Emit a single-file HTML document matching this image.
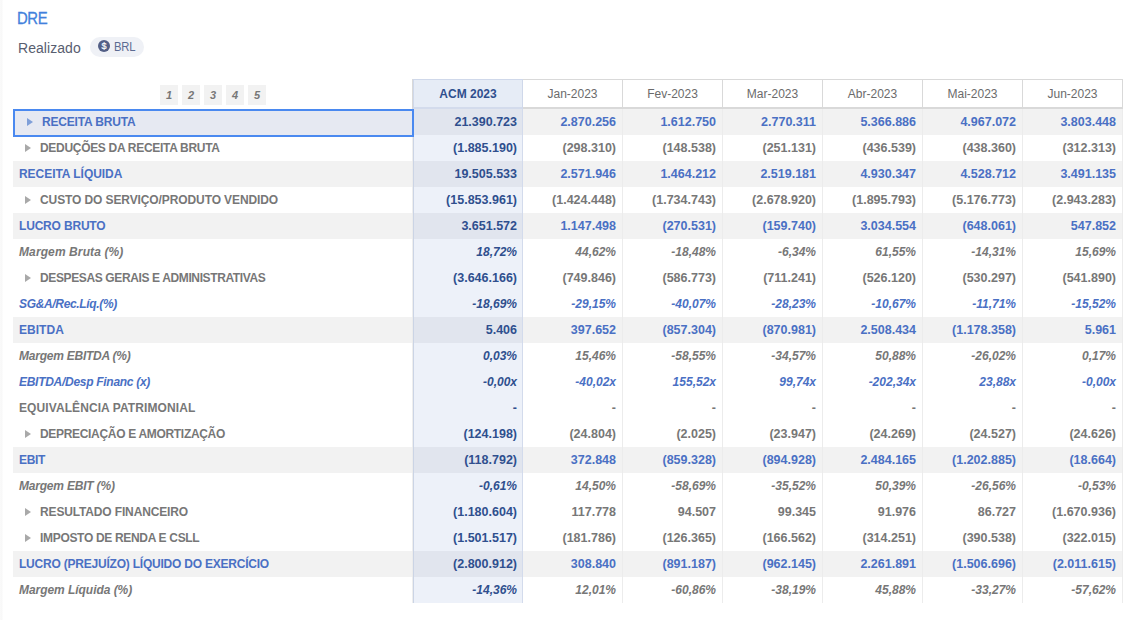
<!DOCTYPE html><html><head><meta charset="utf-8"><style>
*{margin:0;padding:0;box-sizing:border-box}
html,body{width:1131px;height:620px;overflow:hidden;background:#fff}
body{position:relative;font-family:"Liberation Sans",sans-serif}
.a{position:absolute;white-space:nowrap}
.edge{position:absolute;left:0;top:0;width:3px;height:620px;background:linear-gradient(90deg,#fafafa,#f8f8f8 66%,#fff)}
.title{left:17px;top:9px;font-size:16px;color:#4281dc;line-height:20px;letter-spacing:-0.4px;-webkit-text-stroke:0.3px #4281dc;transform:scaleX(0.93);transform-origin:0 0}
.real{left:18px;top:38px;font-size:14px;color:#585e70;line-height:20px;letter-spacing:0.05px}
.badge{left:90px;top:37px;width:54px;height:20px;border-radius:10px;background:#eff1f6}
.coin{left:98px;top:40px;width:12px;height:12px;border-radius:50%;background:#535f86;color:#fff;font-size:9px;font-weight:normal;line-height:12px;text-align:center;-webkit-text-stroke:0.2px #fff}
.brl{left:114.2px;top:39px;font-size:12.5px;color:#5c6a91;line-height:16px;letter-spacing:-0.2px;transform:scaleX(0.9);transform-origin:0 0}
.pg{top:85px;width:18px;height:20px;background:#f2f2f2;color:#777;font-size:11px;font-weight:bold;font-style:italic;text-align:center;line-height:20px}
.hdr{top:79px;height:30px;border-top:1px solid #d9d9d9;border-right:1px solid #d9d9d9;border-bottom:2px solid #d9d9d9;background:#fff;color:#6b6b6b;font-size:12px;text-align:center;line-height:28px}
.hacm{top:79px;height:30px;left:413px;width:110px;border:1px solid #cfd8ea;border-bottom:2px solid #d3dbec;background:#e6ecf6;color:#2f4f8e;font-size:12px;font-weight:bold;text-align:center;line-height:29px}
.row{left:13px;width:1110px;height:26px}
.gbg{background:#f2f2f2}
.acmcol{left:413px;top:109px;width:110px;height:494px;background:#edf1f9;border-left:1px solid #cbd4e5;border-right:1px solid #d3dbec}
.acmg{left:414px;width:108px;height:26px;background:#e1e5ee}
.vline{top:109px;width:1px;height:494px;background:#ececec}
.lbl{font-size:12px;font-weight:bold;line-height:26px}
.tri{width:0;height:0;border-top:4px solid transparent;border-bottom:4px solid transparent;border-left:6px solid #a9a9a9}
.num{font-size:12.5px;font-weight:bold;line-height:26px;text-align:right}
.blue{color:#4a70c4}
.grey{color:#777}
.dblue{color:#2f4f8e}
.it{font-style:italic}
.num.it{font-size:12px}
.sel{left:13px;top:109px;width:401px;height:28px;border:2px solid #4a89f0;background:#e6e9f2}
</style></head><body>
<div class="edge"></div>
<div class="a title">DRE</div>
<div class="a real">Realizado</div>
<div class="a badge"></div>
<div class="a coin">$</div>
<div class="a brl">BRL</div>
<div class="a pg" style="left:160px">1</div>
<div class="a pg" style="left:182px">2</div>
<div class="a pg" style="left:204px">3</div>
<div class="a pg" style="left:226px">4</div>
<div class="a pg" style="left:248px">5</div>
<div class="a row gbg" style="top:109px"></div>
<div class="a row gbg" style="top:161px"></div>
<div class="a row gbg" style="top:213px"></div>
<div class="a row gbg" style="top:317px"></div>
<div class="a row gbg" style="top:447px"></div>
<div class="a row gbg" style="top:551px"></div>
<div class="a acmcol"></div>
<div class="a acmg" style="top:109px"></div>
<div class="a acmg" style="top:161px"></div>
<div class="a acmg" style="top:213px"></div>
<div class="a acmg" style="top:317px"></div>
<div class="a acmg" style="top:447px"></div>
<div class="a acmg" style="top:551px"></div>
<div class="a" style="left:412px;top:109px;width:1px;height:494px;background:#eaeaea;opacity:0.8"></div>
<div class="a" style="left:412px;top:79px;width:1px;height:30px;background:#d9d9d9"></div>
<div class="a vline" style="left:622px"></div>
<div class="a vline" style="left:722px"></div>
<div class="a vline" style="left:822px"></div>
<div class="a vline" style="left:922px"></div>
<div class="a vline" style="left:1022px"></div>
<div class="a vline" style="left:1122px"></div>
<div class="a sel"></div>
<div class="a hacm">ACM 2023</div>
<div class="a hdr" style="left:523px;width:100px">Jan-2023</div>
<div class="a hdr" style="left:623px;width:100px">Fev-2023</div>
<div class="a hdr" style="left:723px;width:100px">Mar-2023</div>
<div class="a hdr" style="left:823px;width:100px">Abr-2023</div>
<div class="a hdr" style="left:923px;width:100px">Mai-2023</div>
<div class="a hdr" style="left:1023px;width:100px">Jun-2023</div>
<div class="a tri" style="left:27px;top:118px;border-left-color:#7f9fd8"></div>
<div class="a lbl blue" style="left:42px;top:109px;letter-spacing:-0.183px">RECEITA BRUTA</div>
<div class="a num dblue" style="right:614px;top:109px">21.390.723</div>
<div class="a num blue" style="right:515px;top:109px">2.870.256</div>
<div class="a num blue" style="right:415px;top:109px">1.612.750</div>
<div class="a num blue" style="right:315px;top:109px">2.770.311</div>
<div class="a num blue" style="right:215px;top:109px">5.366.886</div>
<div class="a num blue" style="right:115px;top:109px">4.967.072</div>
<div class="a num blue" style="right:15px;top:109px">3.803.448</div>
<div class="a tri" style="left:25px;top:144px;border-left-color:#a9a9a9"></div>
<div class="a lbl grey" style="left:40px;top:135px;letter-spacing:-0.308px">DEDUÇÕES DA RECEITA BRUTA</div>
<div class="a num dblue" style="right:614px;top:135px">(1.885.190)</div>
<div class="a num grey" style="right:515px;top:135px">(298.310)</div>
<div class="a num grey" style="right:415px;top:135px">(148.538)</div>
<div class="a num grey" style="right:315px;top:135px">(251.131)</div>
<div class="a num grey" style="right:215px;top:135px">(436.539)</div>
<div class="a num grey" style="right:115px;top:135px">(438.360)</div>
<div class="a num grey" style="right:15px;top:135px">(312.313)</div>
<div class="a lbl blue" style="left:19px;top:161px;letter-spacing:-0.043px">RECEITA LÍQUIDA</div>
<div class="a num dblue" style="right:614px;top:161px">19.505.533</div>
<div class="a num blue" style="right:515px;top:161px">2.571.946</div>
<div class="a num blue" style="right:415px;top:161px">1.464.212</div>
<div class="a num blue" style="right:315px;top:161px">2.519.181</div>
<div class="a num blue" style="right:215px;top:161px">4.930.347</div>
<div class="a num blue" style="right:115px;top:161px">4.528.712</div>
<div class="a num blue" style="right:15px;top:161px">3.491.135</div>
<div class="a tri" style="left:25px;top:196px;border-left-color:#a9a9a9"></div>
<div class="a lbl grey" style="left:40px;top:187px;letter-spacing:-0.103px">CUSTO DO SERVIÇO/PRODUTO VENDIDO</div>
<div class="a num dblue" style="right:614px;top:187px">(15.853.961)</div>
<div class="a num grey" style="right:515px;top:187px">(1.424.448)</div>
<div class="a num grey" style="right:415px;top:187px">(1.734.743)</div>
<div class="a num grey" style="right:315px;top:187px">(2.678.920)</div>
<div class="a num grey" style="right:215px;top:187px">(1.895.793)</div>
<div class="a num grey" style="right:115px;top:187px">(5.176.773)</div>
<div class="a num grey" style="right:15px;top:187px">(2.943.283)</div>
<div class="a lbl blue" style="left:19px;top:213px;letter-spacing:-0.180px">LUCRO BRUTO</div>
<div class="a num dblue" style="right:614px;top:213px">3.651.572</div>
<div class="a num blue" style="right:515px;top:213px">1.147.498</div>
<div class="a num blue" style="right:415px;top:213px">(270.531)</div>
<div class="a num blue" style="right:315px;top:213px">(159.740)</div>
<div class="a num blue" style="right:215px;top:213px">3.034.554</div>
<div class="a num blue" style="right:115px;top:213px">(648.061)</div>
<div class="a num blue" style="right:15px;top:213px">547.852</div>
<div class="a lbl grey it" style="left:19px;top:239px;letter-spacing:0.107px">Margem Bruta (%)</div>
<div class="a num dblue it" style="right:614px;top:239px">18,72%</div>
<div class="a num grey it" style="right:515px;top:239px">44,62%</div>
<div class="a num grey it" style="right:415px;top:239px">-18,48%</div>
<div class="a num grey it" style="right:315px;top:239px">-6,34%</div>
<div class="a num grey it" style="right:215px;top:239px">61,55%</div>
<div class="a num grey it" style="right:115px;top:239px">-14,31%</div>
<div class="a num grey it" style="right:15px;top:239px">15,69%</div>
<div class="a tri" style="left:25px;top:274px;border-left-color:#a9a9a9"></div>
<div class="a lbl grey" style="left:40px;top:265px;letter-spacing:-0.375px">DESPESAS GERAIS E ADMINISTRATIVAS</div>
<div class="a num dblue" style="right:614px;top:265px">(3.646.166)</div>
<div class="a num grey" style="right:515px;top:265px">(749.846)</div>
<div class="a num grey" style="right:415px;top:265px">(586.773)</div>
<div class="a num grey" style="right:315px;top:265px">(711.241)</div>
<div class="a num grey" style="right:215px;top:265px">(526.120)</div>
<div class="a num grey" style="right:115px;top:265px">(530.297)</div>
<div class="a num grey" style="right:15px;top:265px">(541.890)</div>
<div class="a lbl blue it" style="left:19px;top:291px;letter-spacing:-0.333px">SG&amp;A/Rec.Líq.(%)</div>
<div class="a num dblue it" style="right:614px;top:291px">-18,69%</div>
<div class="a num blue it" style="right:515px;top:291px">-29,15%</div>
<div class="a num blue it" style="right:415px;top:291px">-40,07%</div>
<div class="a num blue it" style="right:315px;top:291px">-28,23%</div>
<div class="a num blue it" style="right:215px;top:291px">-10,67%</div>
<div class="a num blue it" style="right:115px;top:291px">-11,71%</div>
<div class="a num blue it" style="right:15px;top:291px">-15,52%</div>
<div class="a lbl blue" style="left:19px;top:317px;letter-spacing:0.040px">EBITDA</div>
<div class="a num dblue" style="right:614px;top:317px">5.406</div>
<div class="a num blue" style="right:515px;top:317px">397.652</div>
<div class="a num blue" style="right:415px;top:317px">(857.304)</div>
<div class="a num blue" style="right:315px;top:317px">(870.981)</div>
<div class="a num blue" style="right:215px;top:317px">2.508.434</div>
<div class="a num blue" style="right:115px;top:317px">(1.178.358)</div>
<div class="a num blue" style="right:15px;top:317px">5.961</div>
<div class="a lbl grey it" style="left:19px;top:343px;letter-spacing:-0.238px">Margem EBITDA (%)</div>
<div class="a num dblue it" style="right:614px;top:343px">0,03%</div>
<div class="a num grey it" style="right:515px;top:343px">15,46%</div>
<div class="a num grey it" style="right:415px;top:343px">-58,55%</div>
<div class="a num grey it" style="right:315px;top:343px">-34,57%</div>
<div class="a num grey it" style="right:215px;top:343px">50,88%</div>
<div class="a num grey it" style="right:115px;top:343px">-26,02%</div>
<div class="a num grey it" style="right:15px;top:343px">0,17%</div>
<div class="a lbl blue it" style="left:19px;top:369px;letter-spacing:-0.286px">EBITDA/Desp Financ (x)</div>
<div class="a num dblue it" style="right:614px;top:369px">-0,00x</div>
<div class="a num blue it" style="right:515px;top:369px">-40,02x</div>
<div class="a num blue it" style="right:415px;top:369px">155,52x</div>
<div class="a num blue it" style="right:315px;top:369px">99,74x</div>
<div class="a num blue it" style="right:215px;top:369px">-202,34x</div>
<div class="a num blue it" style="right:115px;top:369px">23,88x</div>
<div class="a num blue it" style="right:15px;top:369px">-0,00x</div>
<div class="a lbl grey" style="left:19px;top:395px;letter-spacing:0.087px">EQUIVALÊNCIA PATRIMONIAL</div>
<div class="a num dblue" style="right:614px;top:395px">-</div>
<div class="a num grey" style="right:515px;top:395px">-</div>
<div class="a num grey" style="right:415px;top:395px">-</div>
<div class="a num grey" style="right:315px;top:395px">-</div>
<div class="a num grey" style="right:215px;top:395px">-</div>
<div class="a num grey" style="right:115px;top:395px">-</div>
<div class="a num grey" style="right:15px;top:395px">-</div>
<div class="a tri" style="left:25px;top:430px;border-left-color:#a9a9a9"></div>
<div class="a lbl grey" style="left:40px;top:421px;letter-spacing:-0.317px">DEPRECIAÇÃO E AMORTIZAÇÃO</div>
<div class="a num dblue" style="right:614px;top:421px">(124.198)</div>
<div class="a num grey" style="right:515px;top:421px">(24.804)</div>
<div class="a num grey" style="right:415px;top:421px">(2.025)</div>
<div class="a num grey" style="right:315px;top:421px">(23.947)</div>
<div class="a num grey" style="right:215px;top:421px">(24.269)</div>
<div class="a num grey" style="right:115px;top:421px">(24.527)</div>
<div class="a num grey" style="right:15px;top:421px">(24.626)</div>
<div class="a lbl blue" style="left:19px;top:447px;letter-spacing:-0.333px">EBIT</div>
<div class="a num dblue" style="right:614px;top:447px">(118.792)</div>
<div class="a num blue" style="right:515px;top:447px">372.848</div>
<div class="a num blue" style="right:415px;top:447px">(859.328)</div>
<div class="a num blue" style="right:315px;top:447px">(894.928)</div>
<div class="a num blue" style="right:215px;top:447px">2.484.165</div>
<div class="a num blue" style="right:115px;top:447px">(1.202.885)</div>
<div class="a num blue" style="right:15px;top:447px">(18.664)</div>
<div class="a lbl grey it" style="left:19px;top:473px;letter-spacing:-0.200px">Margem EBIT (%)</div>
<div class="a num dblue it" style="right:614px;top:473px">-0,61%</div>
<div class="a num grey it" style="right:515px;top:473px">14,50%</div>
<div class="a num grey it" style="right:415px;top:473px">-58,69%</div>
<div class="a num grey it" style="right:315px;top:473px">-35,52%</div>
<div class="a num grey it" style="right:215px;top:473px">50,39%</div>
<div class="a num grey it" style="right:115px;top:473px">-26,56%</div>
<div class="a num grey it" style="right:15px;top:473px">-0,53%</div>
<div class="a tri" style="left:25px;top:508px;border-left-color:#a9a9a9"></div>
<div class="a lbl grey" style="left:40px;top:499px;letter-spacing:-0.147px">RESULTADO FINANCEIRO</div>
<div class="a num dblue" style="right:614px;top:499px">(1.180.604)</div>
<div class="a num grey" style="right:515px;top:499px">117.778</div>
<div class="a num grey" style="right:415px;top:499px">94.507</div>
<div class="a num grey" style="right:315px;top:499px">99.345</div>
<div class="a num grey" style="right:215px;top:499px">91.976</div>
<div class="a num grey" style="right:115px;top:499px">86.727</div>
<div class="a num grey" style="right:15px;top:499px">(1.670.936)</div>
<div class="a tri" style="left:25px;top:534px;border-left-color:#a9a9a9"></div>
<div class="a lbl grey" style="left:40px;top:525px;letter-spacing:-0.318px">IMPOSTO DE RENDA E CSLL</div>
<div class="a num dblue" style="right:614px;top:525px">(1.501.517)</div>
<div class="a num grey" style="right:515px;top:525px">(181.786)</div>
<div class="a num grey" style="right:415px;top:525px">(126.365)</div>
<div class="a num grey" style="right:315px;top:525px">(166.562)</div>
<div class="a num grey" style="right:215px;top:525px">(314.251)</div>
<div class="a num grey" style="right:115px;top:525px">(390.538)</div>
<div class="a num grey" style="right:15px;top:525px">(322.015)</div>
<div class="a lbl blue" style="left:19px;top:551px;letter-spacing:-0.217px">LUCRO (PREJUÍZO) LÍQUIDO DO EXERCÍCIO</div>
<div class="a num dblue" style="right:614px;top:551px">(2.800.912)</div>
<div class="a num blue" style="right:515px;top:551px">308.840</div>
<div class="a num blue" style="right:415px;top:551px">(891.187)</div>
<div class="a num blue" style="right:315px;top:551px">(962.145)</div>
<div class="a num blue" style="right:215px;top:551px">2.261.891</div>
<div class="a num blue" style="right:115px;top:551px">(1.506.696)</div>
<div class="a num blue" style="right:15px;top:551px">(2.011.615)</div>
<div class="a lbl grey it" style="left:19px;top:577px;letter-spacing:-0.047px">Margem Líquida (%)</div>
<div class="a num dblue it" style="right:614px;top:577px">-14,36%</div>
<div class="a num grey it" style="right:515px;top:577px">12,01%</div>
<div class="a num grey it" style="right:415px;top:577px">-60,86%</div>
<div class="a num grey it" style="right:315px;top:577px">-38,19%</div>
<div class="a num grey it" style="right:215px;top:577px">45,88%</div>
<div class="a num grey it" style="right:115px;top:577px">-33,27%</div>
<div class="a num grey it" style="right:15px;top:577px">-57,62%</div>
</body></html>
